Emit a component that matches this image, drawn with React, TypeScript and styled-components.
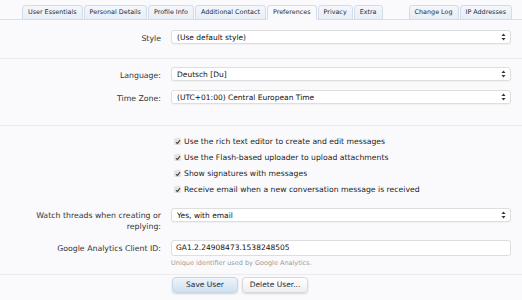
import React from 'react';
import styled, { createGlobalStyle } from 'styled-components';

const GlobalStyle = createGlobalStyle`
	html, body {
		margin: 0;
		padding: 0;
		background: #fafafc;
	}
	body {
		font-family: 'DejaVu Sans', 'Liberation Sans', sans-serif;
		font-size: 8px;
		color: #222;
	}
`;

const leftTabs = ['User Essentials', 'Personal Details', 'Profile Info', 'Additional Contact', 'Preferences', 'Privacy', 'Extra'];
const rightTabs = ['Change Log', 'IP Addresses'];

const checks = [
	'Use the rich text editor to create and edit messages',
	'Use the Flash-based uploader to upload attachments',
	'Show signatures with messages',
	'Receive email when a new conversation message is received',
];

const SelectArrows = () => (
	<svg width="5" height="8" viewBox="0 0 5 8">
		<path d="M2.5 0.5 L4.5 3 L0.5 3 Z" fill="#333" />
		<path d="M2.5 7.5 L4.5 5 L0.5 5 Z" fill="#333" />
	</svg>
);

const Select = ({ value }: { value: string }) => (
	<SelectBox>
		<span>{value}</span>
		<SelectArrows />
	</SelectBox>
);

const App = () => {
	return (
		<Page>
			<GlobalStyle />
			<TabBar>
				<TabGroup>
					{leftTabs.map((t) => (
						<Tab key={t} $active={t === 'Preferences'}>
							{t}
						</Tab>
					))}
				</TabGroup>
				<TabGroup>
					{rightTabs.map((t) => (
						<Tab key={t}>{t}</Tab>
					))}
				</TabGroup>
			</TabBar>

			<Section $top={10} $bottom={14}>
				<Row>
					<Label>Style</Label>
					<Select value="(Use default style)" />
				</Row>
			</Section>

			<Section $top={8} $bottom={21} $gap={9}>
				<Row>
					<Label>Language:</Label>
					<Select value="Deutsch [Du]" />
				</Row>
				<Row>
					<Label>Time Zone:</Label>
					<Select value="(UTC+01:00) Central European Time" />
				</Row>
			</Section>

			<Section $top={10} $bottom={0} $noBorder>
				<Row>
					<span />
					<CheckList>
						{checks.map((c) => (
							<CheckItem key={c}>
								<CheckBox>
									<svg width="6" height="6" viewBox="0 0 6 6">
										<path d="M1 3.2 L2.4 4.6 L5 1.2" stroke="#444" strokeWidth="1.1" fill="none" />
									</svg>
								</CheckBox>
								{c}
							</CheckItem>
						))}
					</CheckList>
				</Row>
			</Section>

			<Section $top={13} $bottom={7} $gap={8}>
				<Row $align="start">
					<Label $wrap>Watch threads when creating or replying:</Label>
					<Select value="Yes, with email" />
				</Row>
				<Row $align="start">
					<Label $pad={3}>Google Analytics Client ID:</Label>
					<Field>
						<TextInput>GA1.2.24908473.1538248505</TextInput>
						<Hint>Unique identifier used by Google Analytics.</Hint>
					</Field>
				</Row>
			</Section>

			<Footer>
				<span />
				<Buttons>
					<Button $primary>Save User</Button>
					<Button>Delete User...</Button>
				</Buttons>
			</Footer>
		</Page>
	);
};

export default App;

const Page = styled.div`
	width: 522px;
	height: 300px;
	overflow: hidden;
	background: #fafafc;
`;

const TabBar = styled.div`
	display: flex;
	justify-content: space-between;
	align-items: flex-end;
	height: 20px;
	padding: 0 10px 0 22px;
	border-bottom: 1px solid #d7e1ec;
	box-sizing: border-box;
`;

const TabGroup = styled.div`
	display: flex;
	gap: 1px;
`;

const Tab = styled.div<{ $active?: boolean }>`
	height: 13px;
	line-height: 13px;
	padding: 0 5px;
	margin-bottom: -1px;
	border: 1px solid #d3dde9;
	border-bottom-color: ${(p) => (p.$active ? '#fafafc' : '#d3dde9')};
	border-radius: 3px 3px 0 0;
	background: ${(p) => (p.$active ? '#fafafc' : 'linear-gradient(to bottom, #f4f7fb, #e8eef6)')};
	color: #1d2a3a;
	font-size: 6.4px;
	white-space: nowrap;
`;

const Section = styled.div<{ $top: number; $bottom: number; $gap?: number; $noBorder?: boolean }>`
	display: flex;
	flex-direction: column;
	gap: ${(p) => p.$gap ?? 0}px;
	padding: ${(p) => p.$top}px 11px ${(p) => p.$bottom}px 0;
	border-bottom: ${(p) => (p.$noBorder ? 'none' : '1px solid #ebebf0')};
`;

const Row = styled.div<{ $align?: string }>`
	display: grid;
	grid-template-columns: 163px 1fr;
	column-gap: 8px;
	align-items: ${(p) => p.$align ?? 'center'};
`;

const Label = styled.div<{ $wrap?: boolean; $pad?: number }>`
	text-align: right;
	padding-left: ${(p) => (p.$wrap ? 24 : 0)}px;
	padding-right: 2px;
	padding-top: ${(p) => p.$pad ?? 2}px;
	line-height: 11px;
	font-size: 7.8px;
	color: #333;
`;

const SelectBox = styled.div`
	display: flex;
	align-items: center;
	justify-content: space-between;
	height: 14px;
	box-sizing: border-box;
	padding: 0 4px 0 5px;
	background: #fff;
	border: 1px solid #dedede;
	border-radius: 3px;
	box-shadow: 0 1px 1px rgba(0, 0, 0, 0.04);
	font-size: 7.5px;
	color: #111;
`;

const CheckList = styled.div`
	display: flex;
	flex-direction: column;
	gap: 5px;
	padding-left: 3px;
`;

const CheckItem = styled.div`
	display: flex;
	align-items: center;
	gap: 3px;
	height: 11px;
	font-size: 7.7px;
	color: #222;
`;

const CheckBox = styled.span`
	display: inline-flex;
	align-items: center;
	justify-content: center;
	width: 7px;
	height: 7px;
	background: #e4e4e4;
	border-radius: 1px;
`;

const Field = styled.div`
	display: flex;
	flex-direction: column;
	gap: 3px;
`;

const TextInput = styled.div`
	height: 16px;
	line-height: 14px;
	box-sizing: border-box;
	padding: 0 4px;
	background: #fff;
	border: 1px solid #dedede;
	border-radius: 3px;
	font-size: 7.5px;
	color: #111;
`;

const Hint = styled.div`
	font-size: 6.5px;
	color: #9a9a9a;
`;

const Footer = styled.div`
	display: grid;
	grid-template-columns: 163px 1fr;
	column-gap: 8px;
	padding-top: 2px;
`;

const Buttons = styled.div`
	display: flex;
	gap: 4px;
	margin-left: 1px;
`;

const Button = styled.div<{ $primary?: boolean }>`
	width: 64px;
	height: 14px;
	line-height: 14px;
	text-align: center;
	border-radius: 4px;
	border: 1px solid ${(p) => (p.$primary ? '#c6d6e6' : '#d9d9d9')};
	background: ${(p) =>
		p.$primary ? 'linear-gradient(to bottom, #eef4fa, #cfe0f0)' : 'linear-gradient(to bottom, #ffffff, #eeeeee)'};
	box-shadow: 0 1px 2px rgba(0, 0, 0, 0.15);
	font-size: 7.5px;
	color: #1d2a3a;
`;
